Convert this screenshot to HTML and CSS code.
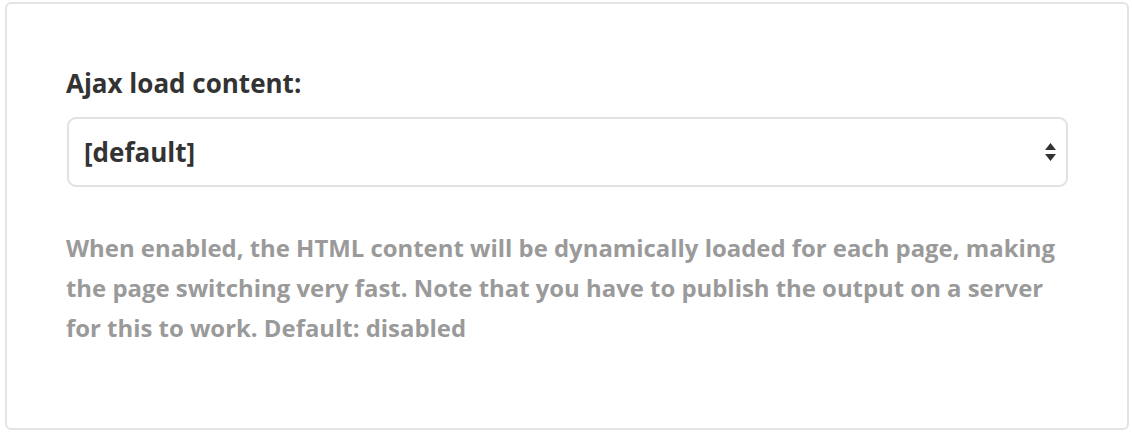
FILE: index.html
```html
<!DOCTYPE html>
<html>
<head>
<meta charset="utf-8">
<link rel="stylesheet" href="styles.css">
</head>
<body>
<div class="card">
  <label class="field-label">Ajax load content:</label>
  <div class="select">
    <span class="select-value">[default]</span>
    <svg class="select-arrows" width="11" height="19" viewBox="0 0 11 19">
      <path d="M5.5 0 L11 7 L0 7 Z" fill="#333"/>
      <path d="M0 11 L11 11 L5.5 18 Z" fill="#333"/>
    </svg>
  </div>
  <p class="help">When enabled, the HTML content will be dynamically loaded for each page, making the page switching very fast. Note that you have to publish the output on a server for this to work. Default: disabled</p>
</div>
</body>
</html>
```
FILE: styles.css
```css
html, body {
  margin: 0;
  padding: 0;
  background: #fff;
}
body {
  padding: 2px 3px 2px 5px;
  font-family: "Open Sans", "Liberation Sans", sans-serif;
}
.card {
  box-sizing: border-box;
  height: 428px;
  border: 2px solid #e4e4e4;
  border-radius: 6px;
  padding: 62px 59px 0 59px;
  display: flex;
  flex-direction: column;
}
.field-label {
  font-size: 26px;
  font-weight: 700;
  line-height: 34px;
  color: #333;
}
.select {
  box-sizing: border-box;
  margin: 17px 0 0 1px;
  height: 70px;
  border: 2px solid #e2e2e2;
  border-radius: 9px;
  display: flex;
  align-items: center;
  justify-content: space-between;
  padding: 0 10px 0 15px;
}
.select-value {
  font-size: 26px;
  font-weight: 700;
  line-height: 34px;
  color: #333;
}
.select-arrows {
  display: block;
  margin-top: 1px;
}
.help {
  margin: 41px 0 0;
  font-size: 23.9px;
  font-weight: 700;
  line-height: 40px;
  color: #9a9a9a;
}
```
